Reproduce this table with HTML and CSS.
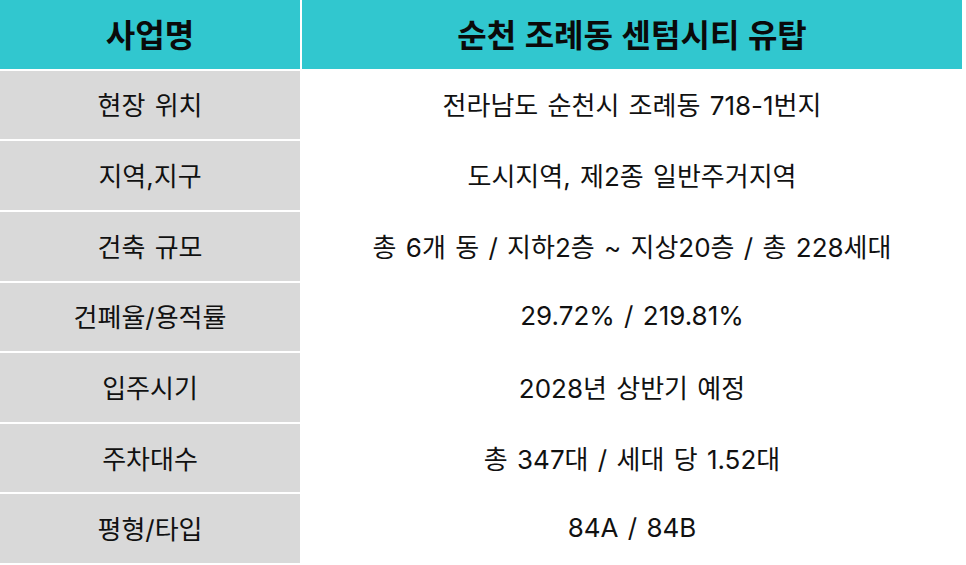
FILE: index.html
```html
<!DOCTYPE html>
<html lang="ko">
<head>
<meta charset="utf-8">
<link rel="stylesheet" href="styles.css">
</head>
<body>
<div class="table">
  <div class="cell head">사업명</div>
  <div class="cell head">순천 조례동 센텀시티 유탑</div>
  <div class="cell label">현장 위치</div>
  <div class="cell value">전라남도 순천시 조례동 718-1번지</div>
  <div class="cell label">지역,지구</div>
  <div class="cell value">도시지역, 제2종 일반주거지역</div>
  <div class="cell label">건축 규모</div>
  <div class="cell value">총 6개 동 / 지하2층 ~ 지상20층 / 총 228세대</div>
  <div class="cell label">건폐율/용적률</div>
  <div class="cell value">29.72% / 219.81%</div>
  <div class="cell label">입주시기</div>
  <div class="cell value">2028년 상반기 예정</div>
  <div class="cell label">주차대수</div>
  <div class="cell value">총 347대 / 세대 당 1.52대</div>
  <div class="cell label">평형/타입</div>
  <div class="cell value">84A / 84B</div>
</div>
</body>
</html>
```
FILE: styles.css
```css
html, body {
  margin: 0;
  padding: 0;
  background: #ffffff;
}
.table {
  display: grid;
  grid-template-columns: 300px 660px;
  grid-template-rows: repeat(8, 1fr);
  gap: 2px;
  height: 563px;
  width: 962px;
  font-family: Inter, "Noto Sans CJK KR", sans-serif;
  color: #111111;
}
.cell {
  display: flex;
  align-items: center;
  justify-content: center;
  font-size: 26px;
  word-spacing: 2px;
  padding-bottom: 2px;
}
.head {
  background: #31c7cf;
  font-size: 32px;
  font-weight: 700;
  color: #0a0a0a;
  word-spacing: 1px;
  padding-bottom: 3px;
}
.label {
  background: #d9d9d9;
}
.value {
  background: #ffffff;
}
```
